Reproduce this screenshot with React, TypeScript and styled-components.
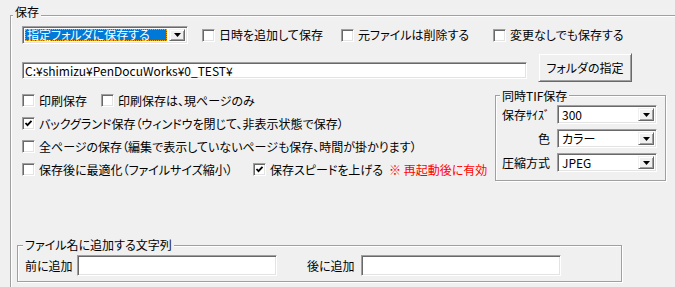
import React from "react";
import styled, { createGlobalStyle, css } from "styled-components";

const Global = createGlobalStyle`
  html, body { margin: 0; padding: 0; background: #f0f0f0; overflow: hidden; }
  body {
    font-family: "Noto Sans CJK JP", "Noto Sans", sans-serif;
    font-size: 12px;
    color: #000;
    font-feature-settings: "palt";
  }
  #root { width: 675px; height: 287px; overflow: hidden; }
`;

const Page = styled.div`
  width: 675px;
  height: 287px;
  overflow: hidden;
  box-sizing: border-box;
  padding: 5px 0 0 10px;
`;

const etched = css`
  border: 1px solid #a0a0a0;
  box-shadow: inset 1px 1px 0 #fff, 1px 1px 0 #fff;
`;

const Group = styled.fieldset<{ $w: number; $h?: number }>`
  ${etched}
  margin: 0;
  padding: 0;
  min-width: 0;
  box-sizing: border-box;
  width: ${(p) => p.$w}px;
  ${(p) => (p.$h ? `height: ${p.$h}px;` : "")}
`;

const Legend = styled.legend<{ $lh: number; $pb?: number; $ml: number }>`
  padding: 0 2px ${(p) => p.$pb ?? 0}px;
  margin-left: ${(p) => p.$ml}px;
  line-height: ${(p) => p.$lh}px;
  background: #f0f0f0;
  white-space: nowrap;
`;

const sunken = css`
  box-sizing: border-box;
  background: #fff;
  border-style: solid;
  border-width: 1px;
  border-color: #a0a0a0 #fff #fff #a0a0a0;
  box-shadow: inset 1px 1px 0 #696969, inset -1px -1px 0 #e3e3e3;
`;

const raised = css`
  box-sizing: border-box;
  background: #f0f0f0;
  border-style: solid;
  border-width: 1px;
  border-color: #f0f0f0 #696969 #696969 #f0f0f0;
  box-shadow: inset 1px 1px 0 #fff, inset -1px -1px 0 #a0a0a0;
`;

/* ---------- combo box ---------- */
const Combo = styled.div<{ $w: number; $h: number }>`
  ${sunken}
  width: ${(p) => p.$w}px;
  height: ${(p) => p.$h}px;
  display: flex;
  align-items: stretch;
  padding: 2px;
`;

const ComboValue = styled.div<{ $selected?: boolean }>`
  flex: 1;
  display: flex;
  align-items: center;
  padding-left: 2px;
  line-height: 14px;
  white-space: nowrap;
  ${(p) =>
    p.$selected &&
    css`
      background: #0078d7;
      color: #fff;
      outline: 1px dotted #ff9c00;
      outline-offset: -1px;
      margin-right: 2px;
    `}
`;

const DropButton = styled.div`
  ${raised}
  width: 16px;
  flex: none;
  display: flex;
  align-items: center;
  justify-content: center;
`;

const Arrow = () => (
  <svg width="7" height="4" viewBox="0 0 7 4" aria-hidden>
    <path d="M0 0H7L3.5 4Z" fill="#000" />
  </svg>
);

const ComboBox = ({ w, h, value, selected }: { w: number; h: number; value: string; selected?: boolean }) => (
  <Combo $w={w} $h={h}>
    <ComboValue $selected={selected}>{value}</ComboValue>
    <DropButton>
      <Arrow />
    </DropButton>
  </Combo>
);

/* ---------- checkbox ---------- */
const CheckItem = styled.label<{ $w?: number; $ml?: number }>`
  display: flex;
  align-items: center;
  gap: 4px;
  flex: none;
  white-space: nowrap;
  line-height: 14px;
  ${(p) => (p.$w ? `width: ${p.$w}px;` : "")}
  ${(p) => (p.$ml ? `margin-left: ${p.$ml}px;` : "")}
`;

const Box = styled.span`
  ${sunken}
  width: 13px;
  height: 13px;
  flex: none;
  display: inline-flex;
  align-items: center;
  justify-content: center;
`;

const Check = () => (
  <svg width="9" height="9" viewBox="0 0 9 9" aria-hidden>
    <path d="M1.5 4 L3.5 6.2 L7.5 1.8" fill="none" stroke="#000" strokeWidth="1.8" />
  </svg>
);

const CheckBox = ({ label, checked, w, ml }: { label: string; checked?: boolean; w?: number; ml?: number }) => (
  <CheckItem $w={w} $ml={ml}>
    <Box>{checked && <Check />}</Box>
    <span>{label}</span>
  </CheckItem>
);

/* ---------- layout ---------- */
const TopRow = styled.div`
  display: flex;
  align-items: center;
  height: 18px;
  margin: 1px 0 0 11px;
`;

const PathRow = styled.div`
  display: flex;
  align-items: flex-start;
  margin: 9px 0 0 11px;
`;

const TextBox = styled.div<{ $w: number; $h: number; $mt?: number }>`
  ${sunken}
  width: ${(p) => p.$w}px;
  height: ${(p) => p.$h}px;
  margin-top: ${(p) => p.$mt ?? 0}px;
  flex: none;
  display: flex;
  align-items: center;
  padding-left: 2px;
  line-height: 14px;
  white-space: nowrap;
  font-feature-settings: normal;
`;

const PushButton = styled.button`
  ${raised}
  width: 94px;
  height: 29px;
  margin-left: 11px;
  padding: 0;
  font: inherit;
  color: #000;
  line-height: 14px;
`;

const Middle = styled.div`
  display: flex;
  align-items: flex-start;
  margin-top: 7px;
`;

const OptionColumn = styled.div`
  width: 473px;
  margin-left: 11px;
  display: flex;
  flex-direction: column;
`;

const OptionRow = styled.div`
  height: 23px;
  display: flex;
  align-items: center;
`;

const Note = styled.span`
  color: #ff0000;
  margin-left: 6px;
  white-space: nowrap;
  line-height: 14px;
`;

const TifGrid = styled.div`
  display: grid;
  grid-template-columns: 50px 100px;
  column-gap: 7px;
  row-gap: 5px;
  padding: 3px 0 8px 4px;
`;

const FieldName = styled.span`
  justify-self: end;
  align-self: center;
  white-space: nowrap;
  line-height: 14px;
`;

const NameRow = styled.div`
  display: flex;
  align-items: center;
  padding: 3px 0 5px 7px;
`;

const NameLabel = styled.span<{ $w: number; $ml?: number }>`
  width: ${(p) => p.$w}px;
  margin-left: ${(p) => p.$ml ?? 0}px;
  flex: none;
  white-space: nowrap;
  line-height: 14px;
`;

const BottomGroupWrap = styled.div`
  margin: 57px 0 0 6px;
`;

export default function App() {
  return (
    <>
      <Global />
      <Page>
        <Group $w={700} $h={320}>
          <Legend $lh={14} $pb={6} $ml={2}>保存</Legend>

          <TopRow>
            <ComboBox w={166} h={18} value="指定フォルダに保存する" selected />
            <CheckBox label="日時を追加して保存" w={139} ml={14} />
            <CheckBox label="元ファイルは削除する" w={152} />
            <CheckBox label="変更なしでも保存する" />
          </TopRow>

          <PathRow>
            <TextBox $w={505} $h={17} $mt={9}>C:¥shimizu¥PenDocuWorks¥0_TEST¥</TextBox>
            <PushButton>フォルダの指定</PushButton>
          </PathRow>

          <Middle>
            <OptionColumn>
              <OptionRow>
                <CheckBox label="印刷保存" w={79} />
                <CheckBox label="印刷保存は、現ページのみ" />
              </OptionRow>
              <OptionRow>
                <CheckBox label="バックグランド保存（ウィンドウを閉じて、非表示状態で保存）" checked />
              </OptionRow>
              <OptionRow>
                <CheckBox label="全ページの保存（編集で表示していないページも保存、時間が掛かります）" />
              </OptionRow>
              <OptionRow>
                <CheckBox label="保存後に最適化（ファイルサイズ縮小）" w={231} />
                <CheckBox label="保存スピードを上げる" checked />
                <Note>※ 再起動後に有効</Note>
              </OptionRow>
            </OptionColumn>

            <Group $w={171}>
              <Legend $lh={13} $ml={4}>同時TIF保存</Legend>
              <TifGrid>
                <FieldName>保存ｻｲｽﾞ</FieldName>
                <ComboBox w={100} h={19} value="300" />
                <FieldName>色</FieldName>
                <ComboBox w={100} h={19} value="カラー" />
                <FieldName>圧縮方式</FieldName>
                <ComboBox w={100} h={19} value="JPEG" />
              </TifGrid>
            </Group>
          </Middle>

          <BottomGroupWrap>
            <Group $w={605}>
              <Legend $lh={14} $ml={5}>ファイル名に追加する文字列</Legend>
              <NameRow>
                <NameLabel $w={52}>前に追加</NameLabel>
                <TextBox $w={200} $h={21} />
                <NameLabel $w={54} $ml={30}>後に追加</NameLabel>
                <TextBox $w={200} $h={21} />
              </NameRow>
            </Group>
          </BottomGroupWrap>
        </Group>
      </Page>
    </>
  );
}
